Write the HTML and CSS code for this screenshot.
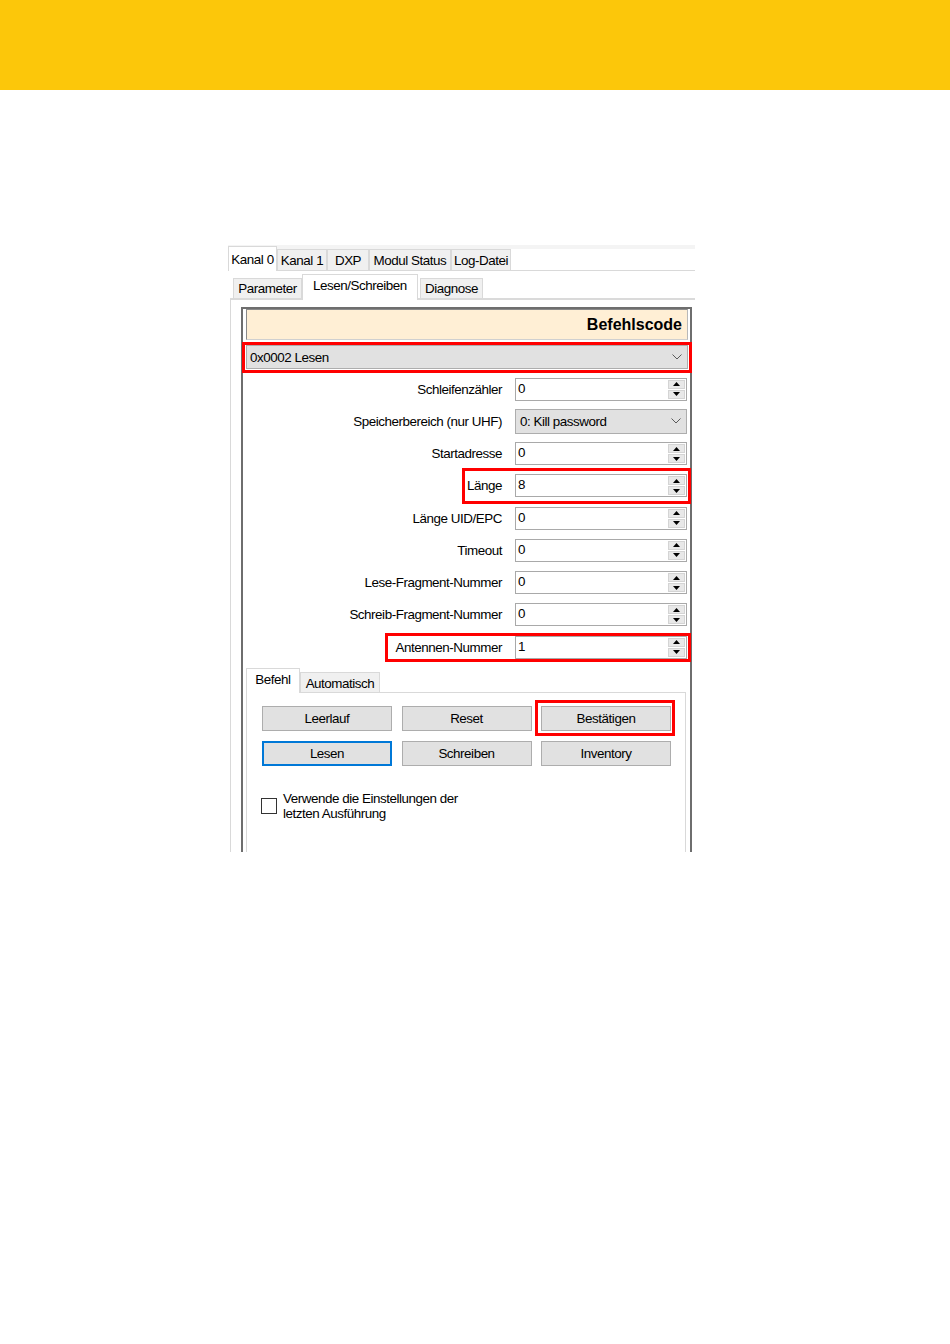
FILE: index.html
```html
<!DOCTYPE html>
<html lang="de">
<head>
    <meta charset="UTF-8">
    <title>Lesen/Schreiben</title>
    <link rel="stylesheet" href="styles.css">
</head>
<body>
    <div class="band"></div>

    <div class="win">
        <div class="tabs-top">
            <div class="tab active t-k0">Kanal 0</div>
            <div class="tab t-k1">Kanal 1</div>
            <div class="tab t-dxp">DXP</div>
            <div class="tab t-mod">Modul Status</div>
            <div class="tab t-log">Log-Datei</div>
        </div>

        <div class="tabs-sub">
            <div class="tab t-par">Parameter</div>
            <div class="tab active t-rw">Lesen/Schreiben</div>
            <div class="tab t-diag">Diagnose</div>
        </div>

        <div class="page">
            <div class="group">
                <div class="title">Befehlscode</div>

                <div class="mark mark-cmd">
                    <div class="combo combo-cmd">
                        <span>0x0002 Lesen</span>
                        <svg class="chev" width="10" height="6" viewBox="0 0 10 6"><path d="M0.5 0.5 L5 5 L9.5 0.5" fill="none" stroke="#5a5a5a" stroke-width="1"/></svg>
                    </div>
                </div>

                <div class="rows">
                    <div class="row">
                        <span class="lbl">Schleifenzähler</span>
                        <div class="num"><span>0</span><div class="spin"><div class="sb"><svg width="7" height="4" viewBox="0 0 7 4"><polygon points="0,4 3.5,0 7,4" fill="#000"/></svg></div><div class="sb"><svg width="7" height="4" viewBox="0 0 7 4"><polygon points="0,0 7,0 3.5,4" fill="#000"/></svg></div></div></div>
                    </div>
                    <div class="row">
                        <span class="lbl">Speicherbereich (nur UHF)</span>
                        <div class="combo combo-small">
                            <span>0: Kill password</span>
                            <svg class="chev" width="10" height="6" viewBox="0 0 10 6"><path d="M0.5 0.5 L5 5 L9.5 0.5" fill="none" stroke="#5a5a5a" stroke-width="1"/></svg>
                        </div>
                    </div>
                    <div class="row">
                        <span class="lbl">Startadresse</span>
                        <div class="num"><span>0</span><div class="spin"><div class="sb"><svg width="7" height="4" viewBox="0 0 7 4"><polygon points="0,4 3.5,0 7,4" fill="#000"/></svg></div><div class="sb"><svg width="7" height="4" viewBox="0 0 7 4"><polygon points="0,0 7,0 3.5,4" fill="#000"/></svg></div></div></div>
                    </div>
                    <div class="row">
                        <div class="mark mark-len">
                            <span class="lbl">Länge</span>
                            <div class="num"><span>8</span><div class="spin"><div class="sb"><svg width="7" height="4" viewBox="0 0 7 4"><polygon points="0,4 3.5,0 7,4" fill="#000"/></svg></div><div class="sb"><svg width="7" height="4" viewBox="0 0 7 4"><polygon points="0,0 7,0 3.5,4" fill="#000"/></svg></div></div></div>
                        </div>
                    </div>
                    <div class="row">
                        <span class="lbl">Länge UID/EPC</span>
                        <div class="num"><span>0</span><div class="spin"><div class="sb"><svg width="7" height="4" viewBox="0 0 7 4"><polygon points="0,4 3.5,0 7,4" fill="#000"/></svg></div><div class="sb"><svg width="7" height="4" viewBox="0 0 7 4"><polygon points="0,0 7,0 3.5,4" fill="#000"/></svg></div></div></div>
                    </div>
                    <div class="row">
                        <span class="lbl">Timeout</span>
                        <div class="num"><span>0</span><div class="spin"><div class="sb"><svg width="7" height="4" viewBox="0 0 7 4"><polygon points="0,4 3.5,0 7,4" fill="#000"/></svg></div><div class="sb"><svg width="7" height="4" viewBox="0 0 7 4"><polygon points="0,0 7,0 3.5,4" fill="#000"/></svg></div></div></div>
                    </div>
                    <div class="row">
                        <span class="lbl">Lese-Fragment-Nummer</span>
                        <div class="num"><span>0</span><div class="spin"><div class="sb"><svg width="7" height="4" viewBox="0 0 7 4"><polygon points="0,4 3.5,0 7,4" fill="#000"/></svg></div><div class="sb"><svg width="7" height="4" viewBox="0 0 7 4"><polygon points="0,0 7,0 3.5,4" fill="#000"/></svg></div></div></div>
                    </div>
                    <div class="row">
                        <span class="lbl">Schreib-Fragment-Nummer</span>
                        <div class="num"><span>0</span><div class="spin"><div class="sb"><svg width="7" height="4" viewBox="0 0 7 4"><polygon points="0,4 3.5,0 7,4" fill="#000"/></svg></div><div class="sb"><svg width="7" height="4" viewBox="0 0 7 4"><polygon points="0,0 7,0 3.5,4" fill="#000"/></svg></div></div></div>
                    </div>
                    <div class="row">
                        <div class="mark mark-ant">
                            <span class="lbl">Antennen-Nummer</span>
                            <div class="num"><span>1</span><div class="spin"><div class="sb"><svg width="7" height="4" viewBox="0 0 7 4"><polygon points="0,4 3.5,0 7,4" fill="#000"/></svg></div><div class="sb"><svg width="7" height="4" viewBox="0 0 7 4"><polygon points="0,0 7,0 3.5,4" fill="#000"/></svg></div></div></div>
                        </div>
                    </div>
                </div>

                <div class="tabs-cmd">
                    <div class="tab active t-bef">Befehl</div>
                    <div class="tab t-auto">Automatisch</div>
                </div>

                <div class="cmd-page">
                    <div class="btns">
                        <button type="button" class="btn">Leerlauf</button>
                        <button type="button" class="btn">Reset</button>
                        <div class="mark mark-btn"><button type="button" class="btn">Bestätigen</button></div>
                        <button type="button" class="btn btn-focus">Lesen</button>
                        <button type="button" class="btn">Schreiben</button>
                        <button type="button" class="btn">Inventory</button>
                    </div>
                    <div class="check">
                        <span class="box"></span>
                        <span class="check-text">Verwende die Einstellungen der<br>letzten Ausführung</span>
                    </div>
                </div>
            </div>
        </div>
    </div>
</body>
</html>
```

FILE: styles.css
```css
* {
    box-sizing: border-box;
}
body {
    margin: 0;
    background: #ffffff;
    font-family: "Liberation Sans", Arial, sans-serif;
    font-size: 13.4px;
    letter-spacing: -0.45px;
    color: #000000;
}
.band {
    height: 90px;
    background: #fcc70a;
}
.win {
    width: 467px;
    height: 607px;
    margin: 155px 0 0 228px;
    overflow: hidden;
    background: #ffffff;
}

/* tabs */
.tab {
    display: flex;
    align-items: center;
    justify-content: center;
    height: 21px;
    background: #f0f0f0;
    border: 1px solid #d9d9d9;
    border-bottom: none;
    white-space: nowrap;
}
.tab.active {
    background: #ffffff;
    position: relative;
}
.tabs-top {
    display: flex;
    align-items: flex-end;
    height: 26px;
    border-bottom: 1px solid #d9d9d9;
    background: linear-gradient(#f4f4f4 0, #f4f4f4 4px, #ffffff 4px);
}
.tabs-top .tab.active {
    height: 25px;
    margin-bottom: -1px;
}
.t-k0 { width: 49px; }
.t-k1 { width: 50px; }
.t-dxp { width: 42px; }
.t-mod { width: 82px; }
.t-log { width: 60px; }

.tabs-sub {
    display: flex;
    align-items: flex-end;
    height: 27px;
    margin-left: 2px;
    padding-left: 3px;
}
.tabs-sub .tab {
    height: 20px;
}
.tabs-sub .tab.active {
    height: 26px;
    margin-bottom: -2px;
    padding-bottom: 4px;
    z-index: 1;
}
.t-par { width: 69px; }
.t-rw { width: 116px; }
.t-diag { width: 63px; margin-left: 2px; }

.page {
    margin-left: 2px;
    height: 600px;
    border-left: 1px solid #d9d9d9;
    border-top: 2px solid #dadada;
    padding: 7px 0 0 10px;
}
.group {
    width: 451px;
    height: 600px;
    border: 2px solid #6e6e6e;
    border-bottom: none;
    padding: 0 2px 0 3px;
}
.title {
    height: 31px;
    background: #ffefd5;
    border: 1px solid #8a8a8a;
    border-right-color: #b8b8b8;
    border-bottom-color: #d0d0d0;
    text-align: right;
    padding-right: 5px;
    font-size: 16px;
    font-weight: bold;
    letter-spacing: 0;
    line-height: 30px;
}

/* red annotation frames */
.mark {
    border: 3px solid #ff0000;
}
.mark-cmd {
    margin: 2px -4px 0 -4px;
    padding: 0 1px 1px 1px;
}
.mark-len {
    display: flex;
    align-items: center;
    gap: 13px;
    padding: 3px 1px 4px 2px;
    margin: -6px -4px -7px 0;
}
.mark-ant {
    display: flex;
    align-items: center;
    gap: 13px;
    padding: 0 1px 0 8px;
    margin: -3px -4px -3px 0;
}
.mark-btn {
    padding: 3px 1px 2px 3px;
    margin: -6px -4px -5px -6px;
}

/* inputs */
.combo {
    display: flex;
    align-items: center;
    background: #e1e1e1;
    border: 1px solid #adadad;
    white-space: nowrap;
}
.combo .chev {
    margin-left: auto;
}
.combo-cmd {
    height: 24px;
    padding: 0 5px 0 3px;
}
.combo-small {
    width: 172px;
    height: 25px;
    padding: 0 5px 0 4px;
}
.rows {
    margin-right: 1px;
}
.row {
    display: flex;
    justify-content: flex-end;
    align-items: center;
    gap: 13px;
    height: 32.25px;
}
.lbl {
    white-space: nowrap;
}
.num {
    display: flex;
    width: 172px;
    height: 23px;
    border: 1px solid #a9a9a9;
    background: #ffffff;
    padding: 1px 1px 1px 2px;
    line-height: 18px;
}
.spin {
    margin-left: auto;
    width: 17px;
    display: flex;
    flex-direction: column;
    gap: 1px;
}
.sb {
    flex: 1;
    display: flex;
    align-items: center;
    justify-content: center;
    background: #e8e8e8;
    border: 1px solid #d4d4d4;
}

/* Befehl / Automatisch */
.tabs-cmd {
    display: flex;
    align-items: flex-end;
    height: 29px;
}
.tabs-cmd .tab {
    height: 20px;
    padding-top: 1px;
}
.tabs-cmd .tab.active {
    height: 25px;
    margin-bottom: -1px;
    padding: 0 0 4px 0;
}
.t-bef { width: 54px; }
.t-auto { width: 80px; }

.cmd-page {
    margin-right: 2px;
    height: 200px;
    border: 1px solid #d9d9d9;
    border-bottom: none;
    padding: 13px 0 0 15px;
}
.btns {
    display: grid;
    grid-template-columns: repeat(3, 130px);
    column-gap: 9.5px;
    row-gap: 10px;
}
.btn {
    height: 25px;
    width: 130px;
    margin: 0;
    padding: 0;
    background: #e1e1e1;
    border: 1px solid #adadad;
    font-family: inherit;
    font-size: 13.4px;
    letter-spacing: -0.45px;
    color: #000000;
}
.btn-focus {
    border: 2px solid #0078d7;
}
.check {
    display: flex;
    align-items: center;
    gap: 6px;
    margin: 25px 0 0 -1px;
}
.box {
    width: 16px;
    height: 16px;
    border: 1px solid #333333;
    background: #ffffff;
}
.check-text {
    line-height: 15px;
}
```
